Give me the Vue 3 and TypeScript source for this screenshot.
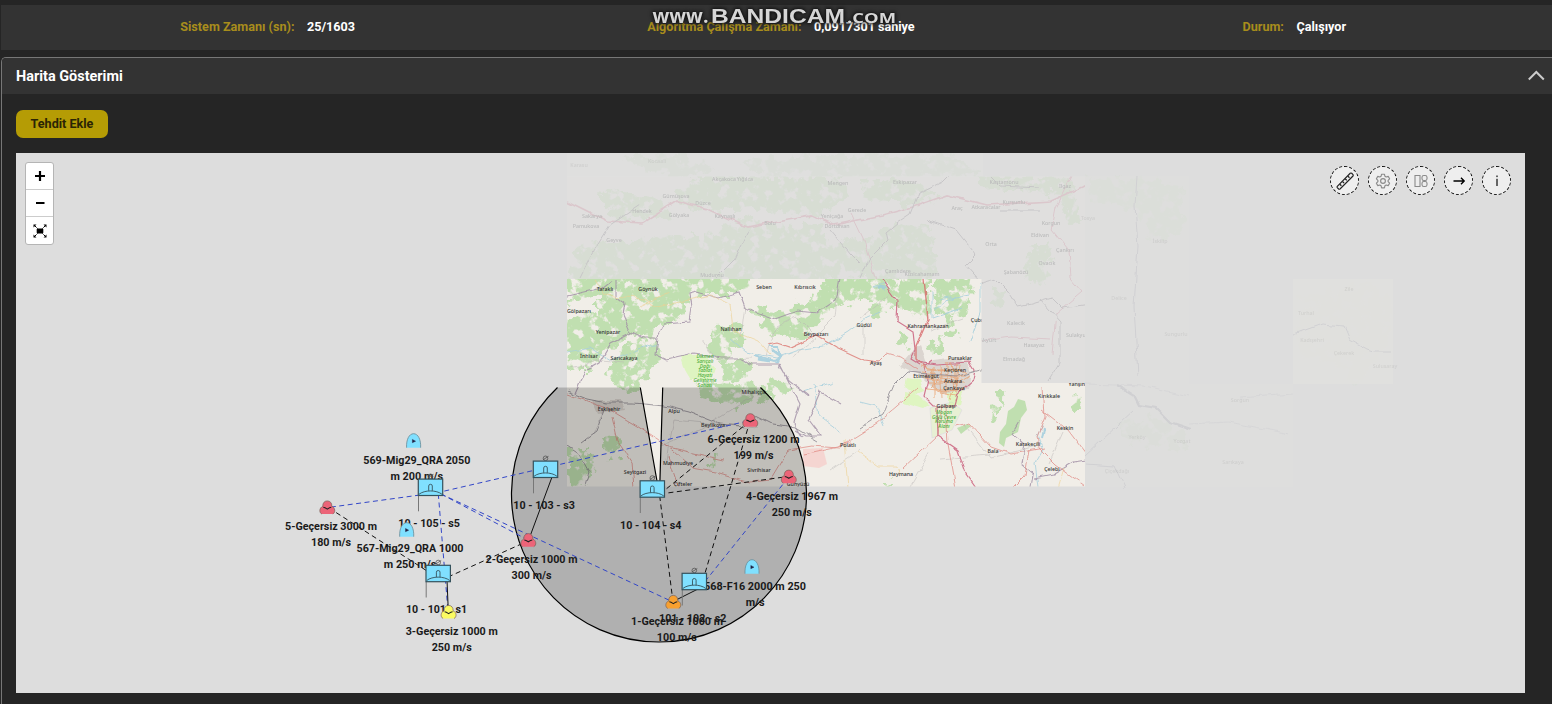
<script setup lang="ts">
type Kind = 'sensor' | 'plane' | 'threat'

interface Line { t: string; x: number; y: number; w: number }
interface Marker { id: string; kind: Kind; x: number; y: number; color?: string; lines: Line[] }
interface Link { x1: number; y1: number; x2: number; y2: number; c: string; solid?: boolean }
interface Place { t: string; x: number; y: number; c?: string }

const red = '#ec6478'
const blue = '#3246c8'
const black = '#111'

const markers: Marker[] = [
  { id: 't6', kind: 'threat', x: 750.3, y: 420.3, color: red, lines: [{ t: '6-Geçersiz 1200 m', x: 707.5, y: 443, w: 92 }, { t: '199 m/s', x: 733.5, y: 459, w: 40 }] },
  { id: 'p569', kind: 'plane', x: 413.6, y: 440.7, lines: [{ t: '569-Mig29_QRA 2050', x: 363.3, y: 464, w: 107 }, { t: 'm 200 m/s', x: 390.5, y: 480, w: 52.5 }] },
  { id: 's3', kind: 'sensor', x: 545.5, y: 469.3, lines: [{ t: '10 - 103 - s3', x: 513.3, y: 509, w: 61.5 }] },
  { id: 't4', kind: 'threat', x: 788.8, y: 476.7, color: red, lines: [{ t: '4-Geçersiz 1967 m', x: 746, y: 499.5, w: 92 }, { t: '250 m/s', x: 771.7, y: 515.5, w: 40 }] },
  { id: 's5', kind: 'sensor', x: 430.5, y: 487.3, lines: [{ t: '10 - 105 - s5', x: 398.3, y: 527, w: 61.5 }] },
  { id: 's4', kind: 'sensor', x: 652.3, y: 489, lines: [{ t: '10 - 104 - s4', x: 620, y: 529, w: 61.5 }] },
  { id: 't5', kind: 'threat', x: 327.3, y: 507.5, color: red, lines: [{ t: '5-Geçersiz 3000 m', x: 285, y: 530.4, w: 92 }, { t: '180 m/s', x: 311, y: 546.4, w: 40 }] },
  { id: 'p567', kind: 'plane', x: 406.7, y: 529.7, lines: [{ t: '567-Mig29_QRA 1000', x: 356.5, y: 552.4, w: 107 }, { t: 'm 250 m/s', x: 383.8, y: 568.4, w: 52.5 }] },
  { id: 't2', kind: 'threat', x: 528.3, y: 540.2, color: red, lines: [{ t: '2-Geçersiz 1000 m', x: 485.5, y: 563.3, w: 92 }, { t: '300 m/s', x: 511.5, y: 579.3, w: 40 }] },
  { id: 'p568', kind: 'plane', x: 752, y: 566.7, lines: [{ t: '568-F16 2000 m 250', x: 704, y: 590.3, w: 102 }, { t: 'm/s', x: 745.7, y: 606.3, w: 19 }] },
  { id: 's1', kind: 'sensor', x: 438.2, y: 573.5, lines: [{ t: '10 - 101 - s1', x: 406, y: 613.3, w: 61 }] },
  { id: 's2', kind: 'sensor', x: 694.3, y: 581.5, lines: [{ t: '101 - 102 - s2', x: 659, y: 621.5, w: 67.5 }] },
  { id: 't1', kind: 'threat', x: 673.3, y: 602, color: '#f7a030', lines: [{ t: '1-Geçersiz 1000 m', x: 631, y: 625, w: 92 }, { t: '100 m/s', x: 656.8, y: 641, w: 40 }] },
  { id: 't3', kind: 'threat', x: 448.6, y: 612, color: '#fbfb62', lines: [{ t: '3-Geçersiz 1000 m', x: 405.7, y: 634.7, w: 92 }, { t: '250 m/s', x: 431.7, y: 650.7, w: 40 }] },
]

const links: Link[] = [
  { x1: 420, y1: 495, x2: 328, y2: 507.5, c: blue },
  { x1: 436, y1: 493, x2: 750, y2: 420.5, c: blue },
  { x1: 441, y1: 494, x2: 528, y2: 540, c: blue },
  { x1: 441, y1: 494, x2: 673, y2: 602, c: blue },
  { x1: 438.3, y1: 494, x2: 448, y2: 611, c: blue },
  { x1: 788, y1: 478, x2: 703, y2: 584, c: blue },
  { x1: 329, y1: 508, x2: 438, y2: 578, c: black },
  { x1: 448, y1: 577, x2: 528, y2: 541, c: black },
  { x1: 660, y1: 494, x2: 750, y2: 421, c: black },
  { x1: 660, y1: 494, x2: 788, y2: 476.5, c: black },
  { x1: 659.7, y1: 496, x2: 673, y2: 602, c: black },
  { x1: 750, y1: 421, x2: 703, y2: 580, c: black },
  { x1: 447, y1: 580, x2: 448.3, y2: 611, c: black, solid: true },
  { x1: 552, y1: 477, x2: 529, y2: 539, c: black, solid: true },
  { x1: 700, y1: 588, x2: 674, y2: 601, c: black, solid: true },
]

const places: Place[] = [
  { t: 'Taraklı', x: 605, y: 290.5 }, { t: 'Göynük', x: 648, y: 290.5 }, { t: 'Seben', x: 764, y: 289 }, { t: 'Kıbrıscık', x: 805, y: 289 },
  { t: 'Gölpazarı', x: 579, y: 313 }, { t: 'Yenipazar', x: 608, y: 333.5 }, { t: 'Nallıhan', x: 731, y: 331 }, { t: 'Beypazarı', x: 816, y: 335.5 },
  { t: 'Güdül', x: 864, y: 327 }, { t: 'İnhisar', x: 589, y: 358 }, { t: 'Sarıcakaya', x: 624, y: 360 }, { t: 'Ayaş', x: 876, y: 364.5 },
  { t: 'Kahramankazan', x: 928, y: 328 }, { t: 'Çubuk', x: 979, y: 322 }, { t: 'Pursaklar', x: 960, y: 360 }, { t: 'Keçiören', x: 955, y: 372 },
  { t: 'Etimesgut', x: 926, y: 378 }, { t: 'Ankara', x: 953, y: 383 }, { t: 'Çankaya', x: 954, y: 390 }, { t: 'Gölbaşı', x: 946, y: 408 },
  { t: 'Eskişehir', x: 609, y: 411 }, { t: 'Alpu', x: 674, y: 413 }, { t: 'Mihalıççık', x: 754, y: 394 }, { t: 'Beylikova', x: 713, y: 427 },
  { t: 'Mahmudiye', x: 678, y: 465 }, { t: 'Seyitgazi', x: 635, y: 474 }, { t: 'Sivrihisar', x: 759, y: 472 }, { t: 'Çifteler', x: 683, y: 486 },
  { t: 'Günyüzü', x: 798, y: 486 }, { t: 'Polatlı', x: 848, y: 447 }, { t: 'Haymana', x: 901, y: 476 }, { t: 'Bala', x: 993, y: 453 },
  { t: 'Kırıkkale', x: 1049, y: 398 }, { t: 'Keskin', x: 1065, y: 430 }, { t: 'Karakeçili', x: 1028, y: 446 }, { t: 'Çelebi', x: 1052, y: 471 }, { t: 'Yahşihan', x: 1080, y: 386 },
]

const parks: Place[] = [
  ...['Dikmen', 'Sarıçalı', 'Dağı', 'Tabiat', 'Hayatı', 'Geliştirme', 'Sahası'].map((t, i) => ({ t, x: 705, y: 358 + i * 4.8 })),
  ...['Mogan', 'Gölü Çevre', 'Koruma', 'Alanı'].map((t, i) => ({ t, x: 944, y: 414 + i * 4.7 })),
]

const fadedPlaces: Place[] = [
  { t: 'Sakarya', x: 592, y: 218 }, { t: 'Hendek', x: 642, y: 213 }, { t: 'Gümüşova', x: 676, y: 198 }, { t: 'Düzce', x: 703, y: 205 },
  { t: 'Akçakoca', x: 724, y: 181 }, { t: 'Yığılca', x: 745, y: 181 }, { t: 'Mengen', x: 838, y: 185 }, { t: 'Gölyaka', x: 679, y: 217 }, { t: 'Kaynaşlı', x: 725, y: 218 },
  { t: 'Bolu', x: 770, y: 225 }, { t: 'Dörtdivan', x: 837, y: 228 }, { t: 'Yeniçağa', x: 832, y: 218 }, { t: 'Gerede', x: 857, y: 212 }, { t: 'Geyve', x: 614, y: 242 },
  { t: 'Pamukova', x: 586, y: 228 }, { t: 'Mudurnu', x: 712, y: 277 }, { t: 'Eskipazar', x: 905, y: 184 }, { t: 'Araç', x: 957, y: 210 }, { t: 'Atkaracalar', x: 986, y: 209 },
  { t: 'Kastamonu', x: 1004, y: 184 }, { t: 'Kurşunlu', x: 1014, y: 204 }, { t: 'Ilgaz', x: 1065, y: 188 }, { t: 'Korgun', x: 1051, y: 225 }, { t: 'Çankırı', x: 1065, y: 252 },
  { t: 'Eldivan', x: 1040, y: 237 }, { t: 'Orta', x: 991, y: 246 }, { t: 'Çamlıdere', x: 898, y: 273 }, { t: 'Kızılcahamam', x: 922, y: 276 }, { t: 'Şabanözü', x: 1016, y: 274 },
  { t: 'Ovacık', x: 1047, y: 265 }, { t: 'Kalecik', x: 1016, y: 325 }, { t: 'Akyurt', x: 988, y: 342 }, { t: 'Sulakyurt', x: 1078, y: 337 }, { t: 'Hasayaz', x: 1034, y: 347 },
  { t: 'Elmadağ', x: 1014, y: 361 },
]

const ghostPlaces: Place[] = [
  { t: 'Karasu', x: 579, y: 167 }, { t: 'Kocaali', x: 657, y: 163 },
  { t: 'Tosya', x: 1088, y: 220 }, { t: 'İskilip', x: 1160, y: 243 }, { t: 'Sungurlu', x: 1176, y: 336 }, { t: 'Delice', x: 1119, y: 300 }, { t: 'Yerköy', x: 1137, y: 439 },
  { t: 'Yozgat', x: 1182, y: 443 }, { t: 'Çiçekdağı', x: 1117, y: 473 }, { t: 'Turhal', x: 1306, y: 315 }, { t: 'Zile', x: 1349, y: 291 }, { t: 'Çekerek', x: 1344, y: 355 },
  { t: 'Kadışehri', x: 1312, y: 342 }, { t: 'Sulusaray', x: 1385, y: 368 }, { t: 'Sorgun', x: 1240, y: 402 }, { t: 'Sarıkaya', x: 1233, y: 464 },
]
</script>

<template>
  <div class="page">
    <header class="status">
      <div class="stat"><span class="key">Sistem Zamanı (sn):</span><span class="val">25/1603</span></div>
      <div class="stat"><span class="key">Algoritma Çalışma Zamanı:</span><span class="val">0,0917301 saniye</span></div>
      <div class="stat"><span class="key">Durum:</span><span class="val">Çalışıyor</span></div>
      <svg class="watermark" width="260" height="34" viewBox="645 0 260 34">
        <text x="652.5" y="22.800" font-size="19.500" textLength="56" lengthAdjust="spacingAndGlyphs">www.</text>
        <text x="711" y="23" font-size="19.500" textLength="134" lengthAdjust="spacingAndGlyphs" class="heavy">BANDICAM</text>
        <text x="847" y="22.500" font-size="13.500" textLength="49" lengthAdjust="spacingAndGlyphs">.COM</text>
      </svg>
    </header>

    <section class="panel">
      <div class="panel-head">
        <h2>Harita Gösterimi</h2>
        <svg width="18" height="12" viewBox="0 0 18 12"><path d="M1.800 9.500 9.300 2l7.500 7.500" fill="none" stroke="#cacaca" stroke-width="2" /></svg>
      </div>
      <div class="panel-body">
        <button class="add">Tehdit Ekle</button>
        <div class="map">
          <svg class="canvas" width="1509" height="540" viewBox="16 153 1509 540">
            <defs>
              <filter id="forest" x="-5%" y="-5%" width="110%" height="110%">
                <feTurbulence type="fractalNoise" baseFrequency="0.09" numOctaves="4" seed="7" result="n" />
                <feDisplacementMap in="SourceGraphic" in2="n" scale="20" xChannelSelector="R" yChannelSelector="G" result="d" />
                <feTurbulence type="fractalNoise" baseFrequency="0.1" numOctaves="4" seed="21" result="m" />
                <feColorMatrix in="m" type="matrix" values="0 0 0 0 0  0 0 0 0 0  0 0 0 0 0  8 0 0 0 -2.7" result="mask" />
                <feComposite in="d" in2="mask" operator="in" />
              </filter>
              <filter id="wiggle" x="-5%" y="-5%" width="110%" height="110%">
                <feTurbulence type="fractalNoise" baseFrequency="0.08" numOctaves="2" seed="4" result="n" />
                <feDisplacementMap in="SourceGraphic" in2="n" scale="6" xChannelSelector="R" yChannelSelector="G" />
                <feGaussianBlur stdDeviation=".3" />
              </filter>
              <clipPath id="bright"><path d="M567 279h414.5v104H1085v103.500H567z" /></clipPath>
              <clipPath id="faded"><path d="M567 176.5h518V383H981.5V279H567z" /></clipPath>
              <clipPath id="ghostTop"><path d="M567 153h416v23.500H567z" /></clipPath>
            </defs>

            <!-- barely loaded tiles -->
            <g opacity=".12" clip-path="url(#ghostTop)">
              <rect x="567" y="153" width="416" height="24" fill="#e8e8e0" />
              <path class="wood" filter="url(#forest)" d="M620 158l60-4 40 16-50 8zM740 160l110-6 110 2 20 20-130 4-90-4z" />
            </g>
            <g opacity=".22">
              <rect x="1085" y="176" width="104" height="311" fill="#e4e3df" />
              <g opacity=".35" class="wood" filter="url(#forest)">
                <path d="M1087 177l60 2 34 4 2 50-30 8-20-30-40-6zM1120 420l40-2 28 20-4 12-44-4-20-8zM1300 295l70-10 24 10-6 50-30 40-20-20-40-10z" />
              </g>
              <rect x="1293" y="279" width="100" height="105" fill="#f0efe2" opacity=".8" />
              <rect x="1189" y="384" width="104" height="103" fill="#e4e3df" opacity=".4" />
              <g class="ln" stroke="#a4a4b0" filter="url(#wiggle)">
                <path stroke-width="2.200" d="M1118 385l16 10 5 10 17 3 14 14 21 7" />
                <path d="M1137 176l-2 30 3 40-4 60 4 70M1085 456l50-47M1085 464l30 2 10 22M1294 334l28-10 22 2 6 14 18 10 6 2 16 0" />
                <path opacity=".5" d="M1189 424l40-2 60 12M1085 384l60 2 44 10M1240 398l53-4" />
              </g>
            </g>

            <!-- half loaded tiles -->
            <g opacity=".2" clip-path="url(#faded)">
              <rect x="567" y="176" width="518" height="208" fill="#eeebe6" />
              <g class="wood" filter="url(#forest)">
                <path d="M580 245l80-8 40 0 40-18 50 8 30-2 10 20 40-10 14 10-10 30-100 10H567z" />
                <path d="M700 176h140l12 20-40 20-60-8-60 4-20-20zM860 178l60 6 20 14-40 6-40-6zM900 225l30 4 10 40-14 14h-60l10-50zM595 190l60 6 20 20-60 4zM980 176l90 2 14 50-16-4-6-30-80-6zM1030 245l22 0-6 40-20-6zM992 290l14 4-4 14-10-4z" />
              </g>
              <g class="ln" filter="url(#wiggle)">
                <path stroke="#d6748c" stroke-width="1.700" d="M567 201l40 20 35 2 35-22 30 8 40 18 40-8 24-4 22 10 50-10 30-8 34-12 40 10 64-4 32-14 22-12" />
                <path stroke="#d6748c" d="M851 213l12 25 15 50M1072 176l-16 32-4 22 16 20 2 28 12 14-26 22-4 40" />
                <path stroke="#746c76" d="M860 278l8-18 20-20-2-8 12-10 12-8 8-20 25-12 10-10M926 220l30 10 20 25-10 10 16 18 14-4 12 12 10 16 14-3 20-6 10 10 30-4M990 176l10 10 40 2M1040 300l20 22 0 40-12 20M1000 210l40 0M640 205l-30 20-20 32-10 20M748 230l-14 30-20 20M830 230l20 24 10 10" />
                <path stroke="#d6748c" d="M981 341l30-4 40 2" />
              </g>
              <g class="names"><text v-for="p in fadedPlaces" :key="p.t" :x="p.x" :y="p.y">{{ p.t }}</text></g>
            </g>
            <g class="names" opacity=".09"><text v-for="p in ghostPlaces" :key="p.t" :x="p.x" :y="p.y">{{ p.t }}</text></g>

            <!-- loaded tiles -->
            <g clip-path="url(#bright)">
              <rect x="567" y="279" width="518" height="208" fill="#f1eee8" />
              <g class="wood" filter="url(#forest)">
                <path d="M620 272h134l-4 14-14 10-42 0-12 18-14 10-20 12-30 2-20-18 0-26zM572 270h45l-8 20-40 14-4-24zM568 312l40 2 20 24-22 12-14 20-28 0zM628 344l28-6 4 16-14 24-10 12-20-2-10-16 10-18z" />
                <path d="M745 306l30 6 30-8 14-12 10-20h54l24 20-12 18-26-12-20 4-26 10-4 14-20 14-32-4-6-14zM715 326l24-2 8 16-24 20-18-8zM720 360l30 4-4 14-22 2z" />
                <path d="M897 272h34l0 36-12 12-20-16zM934 288l20-14 18 8-4 32-18 8-14-10zM930 344l14-6-4 14-12 2zM944 332l12-6 2 10-10 6zM900 330l12 6-6 14-12-8zM870 308l12-2 4 8-12 4z" />
                <path d="M567 450l20-2 8 20-10 20-16-4zM604 440l14-2 4 10-14 4zM612 452l6 2-2 8-6-2zM708 464l10-8-2 10-6 2zM697 384l20-4 64 12-14 8-36 8-28-8zM765 384l14-4 14 8-14 6z" />
                <path d="M990 408l10-2 0 12-8 2zM998 389l8 6-2 10-6-4zM1070 398l10-4 2 12-8 6zM882 486l10-6 0 4zM790 315l14-4-4 10z" />
              </g>
              <path fill="#c0dfb0" d="M1018 399l7 2 2 9-6 8-3 14-12 6-2 9-5-4 1-11 6-8 2-13 6-4zM957 428l10-4 4 2-10 8z" />
              <g fill="#d8f7b4" opacity=".75" filter="url(#wiggle)">
                <path d="M681 356l24 0 10 12-4 12-20 0-6-10zM906 377l14 2 4 12-10 4-10-8zM904 393l14 2 12 10-6 4-20-6zM948 392l16-4-4 16-12 2z" />
              </g>
              <path fill="#d3f7a4" opacity=".3" stroke="#aac" stroke-width=".6" d="M930 408l22-6 10 8-10 20-20 8z" />
              <path fill="#f7c8c4" opacity=".65" d="M803 449l20-1 4 16-8 4-16-2z" />
              <path fill="#d6cfca" opacity=".8" filter="url(#wiggle)" d="M912 352l8-6 6 16 30-4 14 6-2 26-24 4-12-6-14-14-18-8zM592 400l30 0 4 10-28 4z" />

              <g class="ln" opacity=".8" filter="url(#wiggle)">
                <!-- rivers and lakes -->
                <path stroke="#a6cfdd" d="M880 312l-14 6-18 14-24 14-26 4-22 8-30-6-16-14M567 352l24-4 20 12 16-6 30-10M932 290l0 28 30-10M980 282l0 30-10 30M1042 425l-5 10 6 14-8 14 3 24M886 283l-14 4 16 0M815 383l4 34 22 16M860 402l16 4 8 20M803 392l30-10M940 300l30-6M935 310l20-14" />
                <path stroke="#9dcbdc" stroke-width="3" d="M772 350l8 6-4 7M758 359l12 2M878 287l8 1" />
                <path stroke="#9dcbdc" stroke-width="2" d="M769 347l9 0 2 10-6 4-20-6M1043 428l-2 10" />
                <!-- boundaries -->
                <path stroke="#9f8da4" stroke-width="1.100" d="M567 296l35-8 10-8M617 279v18l8 6-2 12 8 18-20 10-12 20-14 8-10 22M631 332l12 6 14 0 8-14 24-2 2-14-2-14 8-2 22 6 20-6 6 16 30 11 22-8 20 2 18-12 4-24M657 338l-2 16 12 6 26-6 28 4 20 0 10 6 28 0 10 16 20 16M841 404l-20-12-12 28 12 16-16 0-10-6M780 364l10 20 10 20-6 20 8 14M1021 420l-8 14 12 10-4 20 12 10-2 12M1034 478l20-4 20-12 12-2" />
                <!-- secondary roads -->
                <path stroke="#bbb6b6" stroke-width=".6" d="M702 340l14 20 36-2M815 336l20-20 4-30M816 336l-20-20-20 10-10 30M864 327l0 28M745 306l-4 30M860 318l30-24 M930 330l34-12M570 368l30-8 24 2M990 455l-50 4M1063 432l-14 32M830 470l30-20M930 452l-20 35M965 424l26 34 46-12M660 446l40-16 54-34M666 460l8-40 84 8M603 410l-10 25M816 338l-26 20" />
                <path stroke="#eed092" stroke-width=".8" d="M595 279l10 16 40 4 12 8 54-12 20 10 3 26 24 10 12 14M670 292l-30 14M858 452l20 14 18 0 4 12M844 440l4 48M1064 468l-6 20" />
                <path stroke="#dd7a74" stroke-width=".8" d="M878 362l8-8 14 4 18 12M803 455l36-8 38-24 42-36M840 447l10-4M567 394l40 14 30 18 35 24 20 18 24 4 34 10 20-2 18-30 24-4 28 2M612 416l6 26 14 20 2 26M668 456l10 30M664 446l60 14M955 426l14-3 22 24 20 7 34-6M1043 386l2 30-8 20 2 12 16 16 30 22M1042 410l26 20 18 24M1029 450l-4 26-12 12M942 405l-4 30-36 34M946 408l2 36 8 44" />
                <path stroke="#dd7a74" stroke-width="1.200" d="M768 345l10-2 12 4 26-12 20 12 28 13 14 2" />
                <path stroke="#c95a78" stroke-width="1.200" d="M882 279l16 22-1 20 16 10 2 20-4 8 8 5M937 408l1 28 20 14 8 24 10 14M916 361l20 3 34-2 5 8-2 10-16 14-3 12-20 0-10-10 4-16-4-14 8-6" />
                <path stroke="#d8686a" stroke-width="1.400" d="M924 279l4 40-12 28 0 12 10 8" />
                <path stroke="#e9a06e" stroke-width=".9" d="M920 366l20 4 12-2 14 4-10 8-16-2-10 10 14 4 20-4M925 378l30 6 14-8M940 364l2 34M950 362l4 28M960 364l-4 20-6 16M932 368l4 24 20 4M944 374l12 4M922 372l14 2M926 390l20 2" />
                <path stroke="#ea9a60" stroke-width=".9" d="M928 369h34M925 376h40M928 383h35M934 390h24M934 366v32M947 362v32M956 363v30" />
                <!-- railways -->
                <path stroke="#807a84" stroke-width=".9" d="M567 391l20 8 20 4 26 0 32 3 24 6 30 12 24 2 10-12 20 10 22 3 24 14M860 428l22-14 12-28 14-14 20 2 30 2 30-8 16 2M567 446l12 8 10 18-4 14M604 410l-8 22-14 10" />
              </g>

              <g class="names"><text v-for="p in places" :key="p.t" :x="p.x" :y="p.y">{{ p.t }}</text></g>
              <g class="names park"><text v-for="p in parks" :key="p.t" :x="p.x" :y="p.y">{{ p.t }}</text></g>
            </g>

            <!-- radar coverage -->
            <path d="M557.5 387.500A147.500 147.500 0 1 0 760.500 387.500H662.700L659.500 495 640.300 387.500z" fill="#000" fill-opacity=".2" />
            <path d="M557.5 387.500A147.500 147.500 0 1 0 760.500 387.500M662.700 387.500 659.500 495 640.300 387.500" fill="none" stroke="#000" stroke-width="1.200" />

            <line v-for="(l, i) in links" :key="i" :x1="l.x1" :y1="l.y1" :x2="l.x2" :y2="l.y2" :stroke="l.c" :stroke-dasharray="l.solid ? undefined : '5 3.5'" />

            <g v-for="m in markers" :key="m.id">
              <g class="tag">
                <text v-for="t in m.lines" :key="t.t" :x="t.x" :y="t.y" :textLength="t.w" lengthAdjust="spacingAndGlyphs">{{ t.t }}</text>
              </g>
              <g :transform="`translate(${m.x} ${m.y})`" fill="none" stroke="#35525c" stroke-width="1">
                <template v-if="m.kind === 'sensor'">
                  <path d="M-12 8V24" stroke="#777" />
                  <circle cy="-11" r="2.300" stroke="#555" stroke-width=".8" />
                  <path d="M-2.500-9.500 3-13" stroke="#555" stroke-width=".8" />
                  <rect x="-12.200" y="-8.200" width="24.400" height="16.400" fill="#80e0ff" stroke-width="1.200" />
                  <path d="M-11.500 7C-6 2.500 6 2.500 11.500 7M-1.800 3.500V-1.300Q-1.800-3 0-3T1.800-1.300V3.500" stroke-width=".9" />
                </template>
                <template v-else-if="m.kind === 'plane'">
                  <path d="M-7 7C-7.500-1-4.500-7 0-7S7.500-1 7 7" fill="#80e0ff" stroke="#6f939f" stroke-width=".9" />
                  <path d="M-1.200-1.300 2 .5-1.200 2z" fill="#224" stroke="#224" stroke-width=".4" />
                </template>
                <template v-else>
                  <path d="M-5.500 6.500C-8.500 5-8 .2-4.500-1.200-4.800-4.500-2.800-6.600 0-6.600S4.800-4.500 4.500-1.200C8 .2 8.500 5 5.500 6.500z" :fill="m.color" stroke="none" />
                  <path d="M-5.500 6.500C-8.500 5-8 .2-4.500-1.200-4.800-4.500-2.800-6.600 0-6.600S4.800-4.500 4.500-1.200C8 .2 8.500 5 5.500 6.500" stroke="#7a6258" stroke-width=".7" />
                  <path d="M-4-.2Q-2.500 0 0 1.600 2.500 0 4-.2" stroke="#222" stroke-width="1.100" />
                </template>
              </g>
            </g>
          </svg>

          <div class="zoom">
            <span><svg width="12" height="12" viewBox="0 0 12 12"><path d="M1 6h10M6 1v10" stroke="#000" stroke-width="2.200" /></svg></span>
            <span><svg width="12" height="12" viewBox="0 0 12 12"><path d="M2 6h8.500" stroke="#000" stroke-width="2.200" /></svg></span>
            <span>
              <svg width="14" height="14" viewBox="0 0 14 14">
                <path d="M1.500 1.500 12.500 12.500M12.500 1.500 1.500 12.500" stroke="#000" stroke-width="1" stroke-dasharray="3 1.200" />
                <rect x="3.700" y="4.500" width="6.600" height="5" rx="1" />
                <path d="M.5.500H3.500L.5 3.500zM13.500.500V3.500L10.500 .5zM.5 13.500V10.500L3.500 13.500zM13.500 13.500H10.500L13.500 10.500z" />
              </svg>
            </span>
          </div>

          <div class="tools">
            <span>
              <svg width="20" height="20" viewBox="0 0 20 20" fill="none" stroke="#222">
                <path d="M2.300 15.300 15.200 2.300Q16 1.700 16.700 2.300L18 3.600Q18.500 4.300 18 5L5 18Q4.300 18.500 3.600 18L2.300 16.700Q1.700 16 2.300 15.300z" stroke-width="1.200" />
                <path d="M4.800 13.200l1.600 1.600M7.500 10.500l1.600 1.600M10.200 7.800l1.600 1.600M12.900 5.100l1.600 1.600" stroke-width="1.300" />
              </svg>
            </span>
            <span>
              <svg width="16" height="16" viewBox="0 0 16 16" fill="none" stroke="#8b8b8b" stroke-width="1.150" stroke-linejoin="round">
                <path d="M6.600 1.200h2.800l.5 2 1.300.8 2-.6 1.400 2.400-1.500 1.500v1.400l1.500 1.500-1.400 2.400-2-.6-1.300.8-.5 2H6.600l-.5-2-1.300-.8-2 .6-1.400-2.400 1.500-1.500V7.300L1.400 5.800l1.400-2.400 2 .6 1.300-.8z" />
                <circle cx="8" cy="8" r="2.400" />
              </svg>
            </span>
            <span>
              <svg width="14" height="14" viewBox="0 0 14 14" fill="none" stroke="#8a8a8a" stroke-width="1.100">
                <path d="M1 1.500h5v11H1z" /><rect x="8" y="1.500" width="5" height="5" rx="1.800" /><rect x="8" y="7.500" width="5" height="5" rx="1.800" />
              </svg>
            </span>
            <span><svg width="14" height="12" viewBox="0 0 14 12" fill="none" stroke="#000" stroke-width="1.400"><path d="M1.500 6h10.500M9 2.800 12.200 6 9 9.200" /></svg></span>
            <span><svg width="6" height="14" viewBox="0 0 6 14" fill="#444"><rect x="2.200" y="1.500" width="1.600" height="1.600" /><rect x="2.200" y="4.800" width="1.600" height="7.200" /></svg></span>
          </div>
        </div>
      </div>
    </section>
  </div>
</template>

<style>
html, body { background: #252525; overflow: hidden; }
</style>

<style scoped>
* { box-sizing: border-box; }
.page { width: 1552px; height: 704px; padding: 5px 0 0 1px; overflow: hidden; background: #252525; font-family: Roboto, "Liberation Sans", sans-serif; }
.status { position: relative; display: grid; grid-template-columns: repeat(3, 1fr); align-items: center; height: 45px; padding: 0 1px 2px 10px; background: #333; font-size: 12.600px; font-weight: 700; }
.stat { display: flex; justify-content: center; gap: 12.500px; white-space: nowrap; }
.key { color: #a88d1c; }
.val { color: #fff; }
.watermark { position: absolute; left: 644px; top: -5px; font-family: "Open Sans", "Liberation Sans", sans-serif; font-weight: 700; fill: #d6d6d6; filter: drop-shadow(0 0 2px #111) drop-shadow(0 0 1px #111); }
.watermark .heavy { font-family: "Liberation Sans", sans-serif; font-weight: 700; }
.panel { height: 660px; margin-top: 7px; border: 1px solid #777; border-right: 0; border-radius: 5px 0 0 0; overflow: hidden; }
.panel-head { display: flex; align-items: center; justify-content: space-between; height: 36px; padding: 0 7px 0 14px; background: #333; }
h2 { margin: 0; color: #fff; font-size: 14.450px; font-weight: 700; }
.panel-body { display: flex; flex-direction: column; align-items: flex-start; gap: 15px; padding: 16px 27px 0 14px; }
.add { width: 92px; height: 28px; padding: 0 0 2px; border: 0; border-radius: 7px; background: #b59c05; color: #2b2505; font: 700 12.600px Roboto, sans-serif; }
.map { position: relative; width: 1509px; height: 540px; background: #ddd; }
.canvas { display: block; }
.wood { fill: #c0dfb0; }
.ln { fill: none; stroke-width: 1; }
.names { font: 500 5.300px "Noto Sans", sans-serif; text-anchor: middle; fill: #333; }
.park { fill: #4cae3c; font-size: 5px; font-style: italic; }
.tag { font: 700 11px Roboto, sans-serif; fill: #1a1a1a; }
.zoom { position: absolute; left: 9px; top: 9px; width: 29px; border: 1px solid #b5b5b5; border-radius: 3px; background: #fff; }
.zoom span { display: flex; align-items: center; justify-content: center; height: 27px; border-bottom: 1px solid #ccc; }
.zoom span:last-child { border-bottom: 0; }
.tools { position: absolute; right: 14px; top: 13px; display: flex; gap: 9px; }
.tools span { display: flex; align-items: center; justify-content: center; width: 29px; height: 29px; border: 1px dashed #111; border-radius: 50%; background: #eee; }
</style>
